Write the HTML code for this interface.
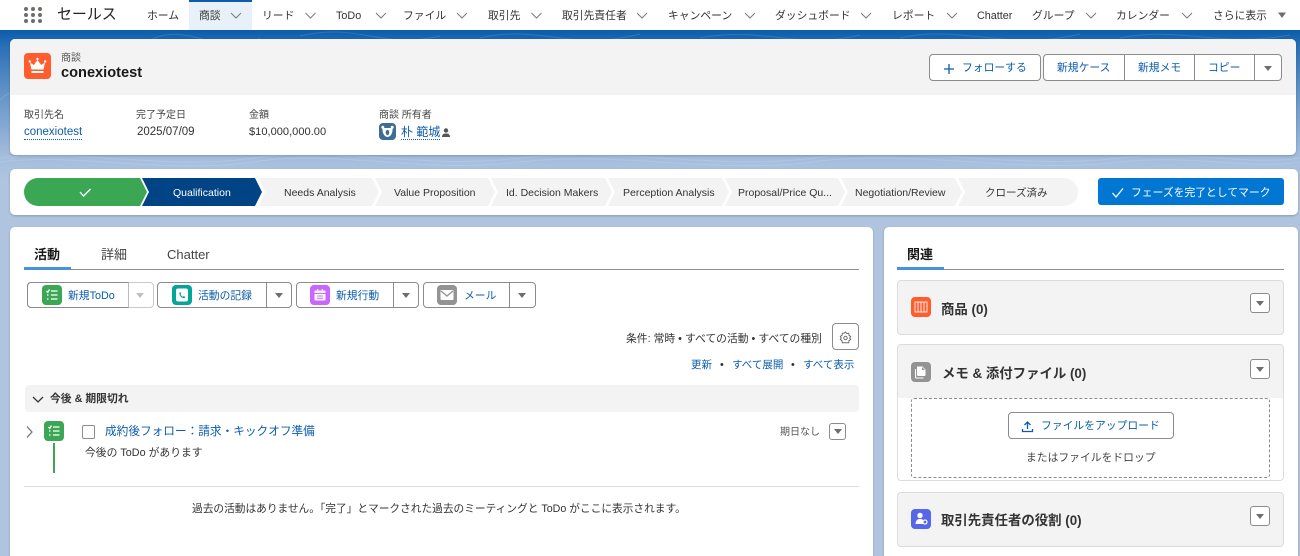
<!DOCTYPE html>
<html lang="ja">
<head>
<meta charset="utf-8">
<style>
html,body{margin:0;padding:0;width:1300px;height:556px;overflow:hidden;background:#b0c4df}
body{position:relative;font-family:"Liberation Sans","Noto Sans CJK JP",sans-serif;font-size:10.8px;color:#444}
div,span,a,svg{position:absolute}
.t{white-space:nowrap;line-height:14px}
.l{color:#0b5cab}
.p{font-size:10.5px;color:#333}
.bg{left:0;top:30px;width:1300px;height:160px;background:linear-gradient(#0b5cab 0,#2a6fb5 16px,#5f91c6 60px,#a3bcdc 125px,#b0c4df 150px)}
.nav{left:0;top:0;width:1300px;height:30px;background:#fff}
.card{background:#fff;border-radius:5px;box-shadow:0 1px 2px rgba(40,60,90,.3)}
.btn{background:#fff;border:1px solid #8b8b8b;border-radius:4px;box-sizing:border-box}
.sep{width:1px;background:#8b8b8b}
.ic{border-radius:4px}
.acc{left:897px;width:387px;background:#f3f3f3;border:1px solid #dcdcdc;border-radius:4px;box-sizing:border-box}
.mini{width:20px;height:20px;background:#fff;border:1px solid #8b8b8b;border-radius:3px;box-sizing:border-box}
.dt{width:0;height:0;border-left:4px solid transparent;border-right:4px solid transparent;border-top:5px solid #706e6b}
</style>
</head>
<body>
<div class="bg"></div>
<svg style="left:0;top:30px" width="1300" height="200" fill="none" stroke="#fff" stroke-opacity=".13">
<path d="M0 70C30 40 50 110 10 130M150 10C190 -10 220 30 260 8M300 6C360 -8 380 20 440 6M480 8C540 -6 570 22 640 4M700 8C760 -4 800 20 860 5M900 8C960 -6 1010 22 1080 4M1120 8C1180 -4 1220 18 1290 5"/>
<path d="M0 128C80 118 170 142 260 127C340 116 420 140 520 128C620 116 720 142 820 127C920 116 1020 140 1120 128C1190 120 1250 136 1300 128"/>
<path d="M0 132C80 122 170 146 260 131C340 120 420 144 520 132C620 120 720 146 820 131C920 120 1020 144 1120 132C1190 124 1250 140 1300 132"/>
</svg>

<div class="nav"></div>
<div style="left:189px;top:0;width:63px;height:30px;background:#e8f1fa;border-top:2px solid #0b5cab;box-sizing:border-box"></div>
<svg style="left:23px;top:6px" width="20" height="18" fill="#706e6b">
<circle cx="3" cy="3" r="2"/><circle cx="10" cy="3" r="2"/><circle cx="17" cy="3" r="2"/>
<circle cx="3" cy="9" r="2"/><circle cx="10" cy="9" r="2"/><circle cx="17" cy="9" r="2"/>
<circle cx="3" cy="15" r="2"/><circle cx="10" cy="15" r="2"/><circle cx="17" cy="15" r="2"/></svg>
<span class="t" style="left:57px;top:6px;font-size:15px;line-height:18px;color:#222;letter-spacing:-.1px">セールス</span>

<span class="t" style="left:147px;top:9px;color:#333">ホーム</span>
<span class="t" style="left:199px;top:9px;color:#333">商談</span>
<span class="t" style="left:262px;top:9px;color:#333">リード</span>
<span class="t" style="left:336px;top:9px;color:#333">ToDo</span>
<span class="t" style="left:403px;top:9px;color:#333">ファイル</span>
<span class="t" style="left:488px;top:9px;color:#333">取引先</span>
<span class="t" style="left:562px;top:9px;color:#333">取引先責任者</span>
<span class="t" style="left:668px;top:9px;color:#333">キャンペーン</span>
<span class="t" style="left:775px;top:9px;color:#333">ダッシュボード</span>
<span class="t" style="left:892px;top:9px;color:#333">レポート</span>
<span class="t" style="left:977px;top:9px;color:#333">Chatter</span>
<span class="t" style="left:1032px;top:9px;color:#333">グループ</span>
<span class="t" style="left:1116px;top:9px;color:#333">カレンダー</span>
<span class="t" style="left:1213px;top:9px;color:#333">さらに表示</span>
<svg style="left:0;top:0" width="1300" height="30" fill="none" stroke="#7d7b78" stroke-width="1">
<path d="M231 13l5 5 5-5M305.500 13l5 5 5-5M376 13l5 5 5-5M457 13l5 5 5-5M531.500 13l5 5 5-5M637 13l5 5 5-5M745 13l5 5 5-5M861 13l5 5 5-5M947 13l5 5 5-5M1086 13l5 5 5-5M1182 13l5 5 5-5"/>
<path d="M1278 12.500h8l-4 5.500z" fill="#706e6b" stroke="none"/></svg>

<!-- Highlights card -->
<div class="card" style="left:10px;top:39px;width:1286px;height:116px;overflow:hidden"><div style="left:0;top:0;width:1286px;height:56px;background:#f3f3f3"></div></div>
<div class="ic" style="left:24px;top:53px;width:27px;height:26px;background:#ff5d2d"></div>
<svg style="left:24px;top:53px" width="27" height="26" fill="#fff"><path d="M6 9.500l3.800 2.500 3.700-5 3.700 5 3.800-2.500-1.500 7H7.500zM7.500 18h12v2h-12z"/><circle cx="5.800" cy="8.500" r="1.200"/><circle cx="13.500" cy="6" r="1.200"/><circle cx="21.200" cy="8.500" r="1.200"/></svg>
<span class="t" style="left:61px;top:52px;font-size:10px;color:#555">商談</span>
<span class="t" style="left:61px;top:65px;font-size:14.600px;line-height:17px;font-weight:700;color:#181818">conexiotest</span>

<div class="btn" style="left:929px;top:54px;width:112px;height:27px"></div>
<svg style="left:943px;top:63px" width="12" height="12" stroke="#0b5cab" stroke-width="1.300"><path d="M6 1v10M1 6h10"/></svg>
<span class="t l" style="left:962px;top:61px">フォローする</span>
<div class="btn" style="left:1043px;top:54px;width:239px;height:27px"></div>
<div class="sep" style="left:1124px;top:55px;height:25px"></div>
<div class="sep" style="left:1194px;top:55px;height:25px"></div>
<div class="sep" style="left:1254px;top:55px;height:25px"></div>
<span class="t l" style="left:1057px;top:61px">新規ケース</span>
<span class="t l" style="left:1138px;top:61px">新規メモ</span>
<span class="t l" style="left:1208px;top:61px">コピー</span>
<div class="dt" style="left:1264px;top:66px"></div>

<span class="t" style="left:24px;top:109px;font-size:10px;color:#444">取引先名</span>
<span class="t l" style="left:24px;top:126px;font-size:11.500px;border-bottom:1px dotted #0b5cab;line-height:13px">conexiotest</span>
<span class="t" style="left:136px;top:109px;font-size:10px;color:#444">完了予定日</span>
<span class="t" style="left:137px;top:125px;font-size:11.500px;color:#333">2025/07/09</span>
<span class="t" style="left:249px;top:109px;font-size:10px;color:#444">金額</span>
<span class="t" style="left:249px;top:125px;font-size:11.100px;color:#333">$10,000,000.00</span>
<span class="t" style="left:379px;top:109px;font-size:10px;color:#444">商談 所有者</span>
<div class="ic" style="left:379px;top:123px;width:17px;height:17px;background:#3e6d94"></div>
<svg style="left:379px;top:123px" width="17" height="17" fill="#fff"><circle cx="3.800" cy="4.300" r="1.500"/><circle cx="13.200" cy="4.300" r="1.500"/><path d="M3.500 5h10c.5 4-1.500 9-5 9s-5.500-5-5-9z"/><ellipse cx="8.500" cy="9.500" rx="1.800" ry="2.600" fill="#3e6d94"/></svg>
<span class="t l" style="left:401px;top:126px;font-size:12px;border-bottom:1px dotted #0b5cab;line-height:13px">朴 範城</span>
<svg style="left:441px;top:127px" width="11" height="11" fill="#555"><circle cx="5" cy="3.500" r="2.200"/><path d="M1 10c0-3 2-3.500 4-3.500s4 .5 4 3.500z"/></svg>

<!-- Path card -->
<div class="card" style="left:10px;top:169px;width:1288px;height:46px"></div>
<svg style="left:0;top:0" width="1300" height="230">
<path d="M38 178H140L147 192L140 206H38A14 14 0 0 1 38 178Z" fill="#3ba755"/>
<path d="M142 178H255L262 192L255 206H142L149 192Z" fill="#014486"/>
<path d="M258 178H372L379 192L372 206H258L265 192Z" fill="#f3f3f3"/>
<path d="M375 178H488L495 192L488 206H375L382 192Z" fill="#f3f3f3"/>
<path d="M491 178H605L612 192L605 206H491L498 192Z" fill="#f3f3f3"/>
<path d="M608 178H722L729 192L722 206H608L615 192Z" fill="#f3f3f3"/>
<path d="M725 178H838L845 192L838 206H725L732 192Z" fill="#f3f3f3"/>
<path d="M841 178H955L962 192L955 206H841L848 192Z" fill="#f3f3f3"/>
<path d="M958 178H1064A14 14 0 0 1 1064 206H958L965 192Z" fill="#f3f3f3"/>
<path d="M80 192l3.500 4 7-7" fill="none" stroke="#fff" stroke-width="1.300"/>
</svg>
<span class="t p" style="left:173px;top:186px;color:#fff">Qualification</span>
<span class="t p" style="left:284px;top:186px">Needs Analysis</span>
<span class="t p" style="left:394px;top:186px">Value Proposition</span>
<span class="t p" style="left:506px;top:186px">Id. Decision Makers</span>
<span class="t p" style="left:623px;top:186px">Perception Analysis</span>
<span class="t p" style="left:738px;top:186px">Proposal/Price Qu...</span>
<span class="t p" style="left:855px;top:186px">Negotiation/Review</span>
<span class="t p" style="left:985px;top:186px">クローズ済み</span>
<div style="left:1098px;top:178px;width:186px;height:27px;background:#0176d3;border-radius:3px"></div>
<svg style="left:1111px;top:187px" width="13" height="12" fill="none" stroke="#fff" stroke-width="1.300"><path d="M1.500 6l3.500 4 7-8.500"/></svg>
<span class="t" style="left:1131px;top:186px;color:#fff">フェーズを完了としてマーク</span>

<!-- Left card -->
<div class="card" style="left:10px;top:227px;width:863px;height:340px"></div>
<span class="t" style="left:34px;top:247px;font-size:13px;line-height:16px;font-weight:700;color:#181818">活動</span>
<span class="t" style="left:101px;top:247px;font-size:13px;line-height:16px;color:#444">詳細</span>
<span class="t" style="left:167px;top:247px;font-size:13px;line-height:16px;color:#444">Chatter</span>
<div style="left:24px;top:269px;width:835px;height:1px;background:#8f8f8f"></div>
<div style="left:24px;top:267px;width:47px;height:3px;background:#4a90e2"></div>

<!-- action buttons -->
<div class="btn" style="left:27px;top:282px;width:127px;height:26px;border-color:#c9c9c9"></div>
<div class="sep" style="left:128px;top:283px;height:24px;background:#e0e0e0"></div>
<div style="left:27px;top:282px;width:102px;height:26px;border:1px solid #8b8b8b;border-radius:4px 0 0 4px;box-sizing:border-box;border-right-color:#bbb"></div>
<div class="ic" style="left:42px;top:285px;width:20px;height:20px;background:#3ba755"></div>
<svg style="left:42px;top:285px" width="20" height="20" stroke="#fff" stroke-width="1.300" fill="none"><path d="M9 6h6.500M9 10h6.500M9 14h6.500M4.500 6l1.300 1.300L7.500 4.500M5 10h1.500M5 14h1.500"/></svg>
<span class="t l" style="left:68px;top:289px">新規ToDo</span>
<div class="dt" style="left:136px;top:293px;border-top-color:#c0c0c0"></div>

<div class="btn" style="left:157px;top:282px;width:135px;height:26px"></div>
<div class="sep" style="left:266px;top:283px;height:24px"></div>
<div class="ic" style="left:172px;top:285px;width:20px;height:20px;background:#06a59a"></div>
<svg style="left:172px;top:285px" width="20" height="20"><rect x="4" y="3.500" width="12" height="13" rx="2" fill="#fff"/><path d="M8 7l1.300 1.300-.7 1.200c.5 1 1.200 1.700 2.200 2.200l1.200-.7 1.300 1.300-1 1c-2.500 0-5-2.500-5-5z" fill="#06a59a"/></svg>
<span class="t l" style="left:198px;top:289px">活動の記録</span>
<div class="dt" style="left:275px;top:293px"></div>

<div class="btn" style="left:296px;top:282px;width:123px;height:26px"></div>
<div class="sep" style="left:393px;top:283px;height:24px"></div>
<div class="ic" style="left:310px;top:285px;width:20px;height:20px;background:#cb65ff"></div>
<svg style="left:310px;top:285px" width="20" height="20" fill="#fff"><path d="M4.500 6.500a1 1 0 0 1 1-1H7V4h1.200v1.500h3.600V4H13v1.500h1.500a1 1 0 0 1 1 1V8h-11zM4.500 9h11v5.500a1 1 0 0 1-1 1h-9a1 1 0 0 1-1-1z"/><path d="M7 11h6M7 13.300h6" stroke="#cb65ff"/></svg>
<span class="t l" style="left:336px;top:289px">新規行動</span>
<div class="dt" style="left:402px;top:293px"></div>

<div class="btn" style="left:423px;top:282px;width:113px;height:26px"></div>
<div class="sep" style="left:509px;top:283px;height:24px"></div>
<div class="ic" style="left:437px;top:285px;width:20px;height:20px;background:#939393"></div>
<svg style="left:437px;top:285px" width="20" height="20"><rect x="3.500" y="5" width="13" height="10" rx="1" fill="#fff"/><path d="M4 6l6 5 6-5" fill="none" stroke="#939393" stroke-width="1.300"/></svg>
<span class="t l" style="left:464px;top:289px">メール</span>
<div class="dt" style="left:518px;top:293px"></div>

<span class="t" style="left:626px;top:332px;color:#333">条件: 常時 • すべての活動 • すべての種別</span>
<div class="btn" style="left:832px;top:323px;width:27px;height:27px"></div>
<svg style="left:839px;top:331px" width="13" height="13" fill="none" stroke="#706e6b" stroke-width="1"><path d="M6.500 1l1.200 1.600 2-.3.300 2 1.700 1.200-1 1.500 1 1.500-1.700 1.200-.3 2H3.300l-.3-2-1.700-1.200 1-1.500-1-1.500L3 4.300l.3-2 2-.3z"/><circle cx="6.500" cy="7" r="1.700"/></svg>
<span class="t l" style="left:691px;top:358px;font-size:10.500px">更新</span>
<span class="t" style="left:720px;top:358px;color:#333">•</span>
<span class="t l" style="left:732px;top:358px;font-size:10.500px">すべて展開</span>
<span class="t" style="left:791px;top:358px;color:#333">•</span>
<span class="t l" style="left:803px;top:358px;font-size:10.500px">すべて表示</span>

<div style="left:25px;top:385px;width:834px;height:27px;background:#f3f3f3;border-radius:4px"></div>
<svg style="left:32px;top:395px" width="12" height="9" fill="none" stroke="#333" stroke-width="1.300"><path d="M1 2l5 5 5-5"/></svg>
<span class="t" style="left:50px;top:392px;font-weight:700;color:#333">今後 &amp; 期限切れ</span>

<svg style="left:26px;top:425px" width="8" height="14" fill="none" stroke="#706e6b" stroke-width="1.200"><path d="M1 1.500l5 5.500-5 5.500"/></svg>
<div class="ic" style="left:44px;top:421px;width:20px;height:20px;background:#3ba755"></div>
<svg style="left:44px;top:421px" width="20" height="20" stroke="#fff" stroke-width="1.300" fill="none"><path d="M9 6h6.500M9 10h6.500M9 14h6.500M4.500 6l1.300 1.300L7.500 4.500M5 10h1.500M5 14h1.500"/></svg>
<div style="left:53px;top:443px;width:2px;height:30px;background:#3ba755"></div>
<div style="left:82px;top:425px;width:13px;height:14px;background:#fff;border:1px solid #8b8b8b;border-radius:2px;box-sizing:border-box"></div>
<span class="t l" style="left:105px;top:425px;font-size:11.670px">成約後フォロー：請求・キックオフ準備</span>
<span class="t" style="left:85px;top:446px;color:#333">今後の ToDo があります</span>
<span class="t" style="left:780px;top:426px;font-size:10px;color:#555">期日なし</span>
<div class="mini" style="left:829px;top:423px;width:17px;height:17px"></div>
<div class="dt" style="left:833.500px;top:429px"></div>
<div style="left:24px;top:486px;width:835px;height:1px;background:#dedede"></div>
<span class="t" style="left:192px;top:502px;font-size:10.700px;color:#333">過去の活動はありません。「完了」とマークされた過去のミーティングと ToDo がここに表示されます。</span>

<!-- Right card -->
<div class="card" style="left:884px;top:227px;width:414px;height:340px"></div>
<span class="t" style="left:907px;top:247px;font-size:13px;line-height:16px;font-weight:700;color:#181818">関連</span>
<div style="left:897px;top:269px;width:387px;height:1px;background:#8f8f8f"></div>
<div style="left:897px;top:267px;width:47px;height:3px;background:#4a90e2"></div>

<div class="acc" style="top:280px;height:55px"></div>
<div class="ic" style="left:911px;top:297px;width:20px;height:20px;background:#ff5d2d"></div>
<svg style="left:911px;top:297px" width="20" height="20" fill="none" stroke="#fff" stroke-opacity=".85"><rect x="4" y="5" width="12" height="10" stroke-width="1"/><path d="M7 5v10M10 5v10M13 5v10"/></svg>
<span class="t" style="left:941px;top:302px;font-size:13.400px;line-height:16px;font-weight:700;color:#333">商品 (0)</span>
<div class="mini" style="left:1250px;top:293px"></div>
<div class="dt" style="left:1256px;top:301px"></div>

<div class="acc" style="top:344px;height:137px;background:#fff"></div>
<div style="left:898px;top:345px;width:385px;height:53px;background:#f3f3f3;border-radius:3px 3px 0 0"></div>
<div class="ic" style="left:911px;top:362px;width:20px;height:20px;background:#939393"></div>
<svg style="left:911px;top:362px" width="20" height="20"><path d="M6 4.500h5.500l3 3V13a1 1 0 0 1-1 1H7a1 1 0 0 1-1-1z" fill="#fff"/><path d="M4.500 7v8a1 1 0 0 0 1 1h7" fill="none" stroke="#fff" stroke-width="1.100"/><path d="M11 5l3 3h-3z" fill="#939393"/></svg>
<span class="t" style="left:942px;top:366px;font-size:13.400px;line-height:16px;font-weight:700;color:#333">メモ &amp; 添付ファイル (0)</span>
<div class="mini" style="left:1250px;top:359px"></div>
<div class="dt" style="left:1256px;top:367px"></div>
<div style="left:911px;top:398px;width:359px;height:80px;border:1px dashed #8b8b8b;box-sizing:border-box;border-radius:3px"></div>
<div class="btn" style="left:1008px;top:412px;width:166px;height:27px"></div>
<svg style="left:1021px;top:420px" width="13" height="13" fill="none" stroke="#0b5cab" stroke-width="1.300"><path d="M6.500 9V2M3.500 5l3-3 3 3M1.500 9v2.500h10V9"/></svg>
<span class="t l" style="left:1041px;top:419px">ファイルをアップロード</span>
<span class="t" style="left:1026px;top:451px;color:#444">またはファイルをドロップ</span>

<div class="acc" style="top:492px;height:55px"></div>
<div class="ic" style="left:911px;top:509px;width:20px;height:20px;background:#5867e8"></div>
<svg style="left:911px;top:509px" width="20" height="20" fill="#fff"><circle cx="9" cy="6.500" r="2.700"/><path d="M4.500 15c0-3.500 2-5 4.500-5s3 1 3 1v4z"/><circle cx="14" cy="13" r="2" fill="none" stroke="#fff" stroke-width="1.200"/></svg>
<span class="t" style="left:941px;top:513px;font-size:13.400px;line-height:16px;font-weight:700;color:#333">取引先責任者の役割 (0)</span>
<div class="mini" style="left:1250px;top:506px"></div>
<div class="dt" style="left:1256px;top:514px"></div>
</body>
</html>
